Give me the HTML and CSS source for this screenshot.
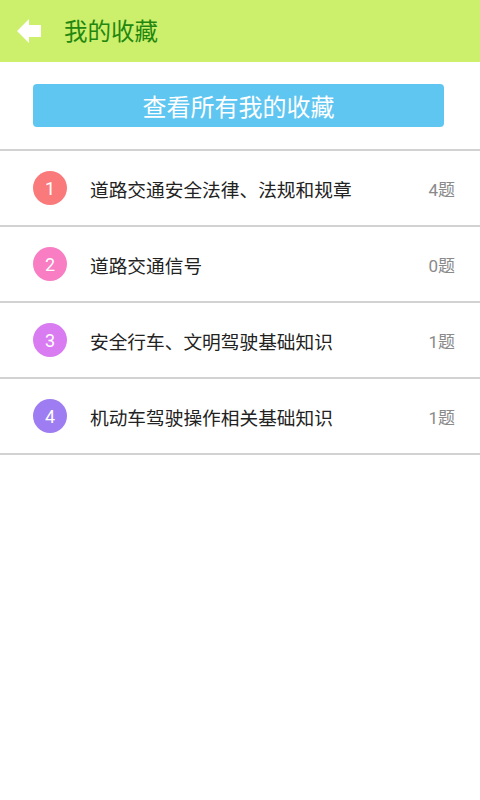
FILE: index.html
```html
<!DOCTYPE html>
<html lang="zh-CN">
<head>
  <meta charset="UTF-8" />
  <meta name="viewport" content="width=device-width, initial-scale=1.0"/>
  <title>我的收藏</title>
  <link rel="stylesheet" href="styles.css">
</head>
<body>
  <header class="topbar">
    <a href="#" class="back">
      <svg width="25" height="26" viewBox="0 0 25 26">
        <path d="M0 13 L12 1 L12 7 L24 7 L24 19 L12 19 L12 25 Z" fill="#ffffff"/>
      </svg>
    </a>
    <h1>我的收藏</h1>
  </header>

  <main>
    <div class="action">
      <button class="view-all">查看所有我的收藏</button>
    </div>

    <!-- 收藏分类 -->
    <ul class="fav-list">
      <li class="fav-item">
        <span class="num c1">1</span>
        <span class="name">道路交通安全法律、法规和规章</span>
        <span class="count">4题</span>
      </li>
      <li class="fav-item">
        <span class="num c2">2</span>
        <span class="name">道路交通信号</span>
        <span class="count">0题</span>
      </li>
      <li class="fav-item">
        <span class="num c3">3</span>
        <span class="name">安全行车、文明驾驶基础知识</span>
        <span class="count">1题</span>
      </li>
      <li class="fav-item">
        <span class="num c4">4</span>
        <span class="name">机动车驾驶操作相关基础知识</span>
        <span class="count">1题</span>
      </li>
    </ul>
  </main>
</body>
</html>
```

FILE: styles.css
```css
* {
  box-sizing: border-box;
}

body {
  margin: 0;
  background: #ffffff;
  font-family: Roboto, "Noto Sans CJK SC", sans-serif;
}

.topbar {
  height: 62px;
  background-color: #ccef6c;
  display: flex;
  align-items: center;
  padding-left: 17px;
}

.back {
  display: flex;
  width: 25px;
  height: 26px;
}

.topbar h1 {
  margin: 0 0 2px 22px;
  font-size: 23.5px;
  font-weight: normal;
  color: #23870f;
}

.action {
  padding: 22px 36px 22px 33px;
}

.view-all {
  display: block;
  width: 100%;
  height: 43px;
  border: none;
  border-radius: 4px;
  background-color: #5ec6f1;
  color: white;
  font-family: inherit;
  font-size: 24px;
  padding: 0;
}

.fav-list {
  list-style: none;
  margin: 0;
  padding: 0;
  border-top: 2px solid #d2d2d2;
}

.fav-item {
  display: flex;
  align-items: center;
  height: 76px;
  padding: 0 25px 0 33px;
  border-bottom: 2px solid #d2d2d2;
}

.num {
  width: 34px;
  height: 34px;
  border-radius: 50%;
  color: white;
  font-size: 18px;
  display: flex;
  align-items: center;
  justify-content: center;
  flex-shrink: 0;
}

.c1 { background-color: #fa7a7b; }
.c2 { background-color: #f87dc3; }
.c3 { background-color: #d97cf1; }
.c4 { background-color: #9e7cf2; }

.name {
  flex: 1;
  margin-left: 23px;
  font-size: 18.7px;
  color: #222;
}

.count {
  font-size: 17px;
  color: #8a8a8a;
}
```
